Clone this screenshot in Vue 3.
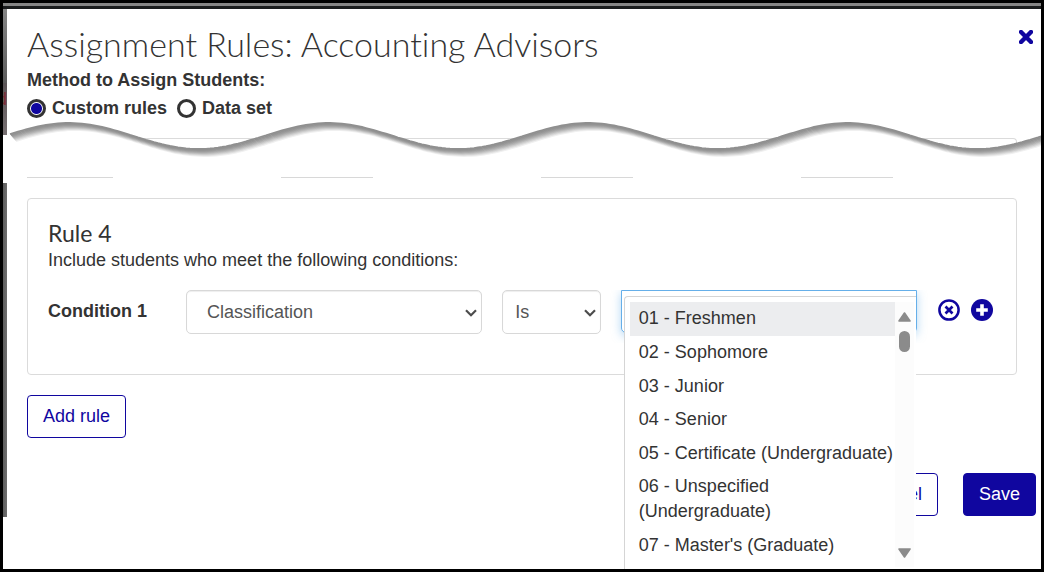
<script setup>
import { ref } from 'vue'

const method = ref('custom')
const field = ref('Classification')
const operator = ref('Is')
const active = ref(0)

const options = [
  '01 - Freshmen',
  '02 - Sophomore',
  '03 - Junior',
  '04 - Senior',
  '05 - Certificate (Undergraduate)',
  '06 - Unspecified (Undergraduate)',
  "07 - Master's (Graduate)"
]

// Torn-edge wave: one period per 259.5 units
function wavePoints() {
  const pts = []
  for (let x = 7; x <= 1043; x += 4) {
    const y = 15 - 13 * Math.cos(((x - 66) / 259.5) * 2 * Math.PI)
    pts.push(`${x},${y.toFixed(1)}`)
  }
  return pts.join(' ')
}
const wave = wavePoints()
const cover = `${wave} 1043,50 7,50`
const shades = ['#8f8f8f', '#939393', '#9c9c9c', '#a9a9a9', '#b9b9b9', '#cccccc', '#dedede', '#f0f0f0']
const layers = shades.map((color, i) => ({ color, i })).reverse()
</script>

<template>
  <div class="frame">
    <div class="backdrop-top"></div>
    <div class="body">
      <div class="strip" aria-hidden="true">
        <div class="strip-a"></div>
        <div class="strip-b"><span>d</span></div>
        <div class="strip-gap"></div>
        <div class="strip-c"></div>
      </div>

      <main class="dialog">
        <header>
          <h1>Assignment Rules: Accounting Advisors</h1>
          <button class="close" aria-label="Close">
            <svg viewBox="0 0 14 14" width="14" height="14"><path d="M2 2 12 12M12 2 2 12" stroke="#10069f" stroke-width="4.4" stroke-linecap="square" /></svg>
          </button>
        </header>

        <fieldset class="method">
          <legend>Method to Assign Students:</legend>
          <div class="radios">
            <label><input v-model="method" type="radio" name="method" value="custom" />Custom rules</label>
            <label><input v-model="method" type="radio" name="method" value="data" />Data set</label>
          </div>
        </fieldset>

        <div class="tear">
          <div class="previous"></div>
          <svg class="wave" viewBox="0 0 1038 50" preserveAspectRatio="none" aria-hidden="true">
            <polygon :points="cover" fill="#fff" />
            <polyline
              v-for="l in layers"
              :key="l.i"
              :points="wave"
              :transform="`translate(${l.i * 0.85} ${l.i})`"
              fill="none"
              :stroke="l.color"
              stroke-width="1.8"
            />
          </svg>
          <div class="dashes"></div>
        </div>

        <section class="card">
          <h2>Rule 4</h2>
          <p>Include students who meet the following conditions:</p>
          <div class="condition">
            <label class="name" for="field">Condition 1</label>
            <div class="select wide">
              <select id="field" v-model="field"><option>Classification</option></select>
              <svg viewBox="0 0 12 8" width="12" height="8"><path d="M1 1.2 6 6.2 11 1.2" fill="none" stroke="#4d4d4d" stroke-width="2.2" /></svg>
            </div>
            <div class="select">
              <select v-model="operator" aria-label="Operator"><option>Is</option></select>
              <svg viewBox="0 0 12 8" width="12" height="8"><path d="M1 1.2 6 6.2 11 1.2" fill="none" stroke="#4d4d4d" stroke-width="2.2" /></svg>
            </div>
            <div class="combo">
              <input type="text" role="combobox" aria-label="Value" aria-expanded="true" aria-controls="values" />
              <div class="popup">
                <ul id="values" role="listbox">
                  <li
                    v-for="(o, i) in options"
                    :key="o"
                    role="option"
                    :aria-selected="i === active"
                    :class="{ active: i === active }"
                    @mouseenter="active = i"
                  >{{ o }}</li>
                </ul>
                <div class="scrollbar" aria-hidden="true">
                  <svg viewBox="0 0 13 10" width="13" height="10"><path d="M6.5 1 12 9H1Z" fill="#8b8b8b" stroke="#8b8b8b" stroke-width="1.6" stroke-linejoin="round" /></svg>
                  <div class="thumb"></div>
                  <svg class="down" viewBox="0 0 13 10" width="13" height="10"><path d="M6.5 9 12 1H1Z" fill="#8b8b8b" stroke="#8b8b8b" stroke-width="1.6" stroke-linejoin="round" /></svg>
                </div>
              </div>
            </div>
            <div class="actions">
              <button aria-label="Remove condition">
                <svg viewBox="0 0 22 22" width="22" height="22"><circle cx="11" cy="11" r="9.6" fill="none" stroke="#10069f" stroke-width="2.5" /><path d="M7.5 7.5 14.5 14.5M14.5 7.5 7.5 14.5" stroke="#10069f" stroke-width="2.7" /></svg>
              </button>
              <button aria-label="Add condition">
                <svg viewBox="0 0 22 22" width="22" height="22"><circle cx="11" cy="11" r="11" fill="#10069f" /><path d="M11 5.2V16.8M5.2 11H16.8" stroke="#fff" stroke-width="3.6" /></svg>
              </button>
            </div>
          </div>
        </section>

        <button class="btn add">Add rule</button>

        <footer>
          <button class="btn">Cancel</button>
          <button class="btn primary">Save</button>
        </footer>
      </main>
    </div>
  </div>
</template>

<style>
body {
  background: #fff;
}
</style>

<style scoped>
* {
  box-sizing: border-box;
}
.frame {
  display: flex;
  flex-direction: column;
  height: 100vh;
  border: 3px solid #000;
  overflow: hidden;
  background: #fff;
  color: #333;
  font: 18px/25px "Liberation Sans", Arial, sans-serif;
}
.backdrop-top {
  flex: none;
  height: 6px;
  border-top: 3px solid #858585;
  border-bottom: 3px solid #1a1c1d;
}
.body {
  flex: 1;
  display: flex;
  min-height: 0;
}
.strip {
  flex: none;
  display: flex;
  flex-direction: column;
  width: 4px;
}
.strip-a {
  height: 74px;
  background: linear-gradient(#858585, #5b5b5b);
}
.strip-b {
  display: flex;
  justify-content: flex-end;
  height: 52px;
  padding-top: 4px;
  overflow: hidden;
  background: linear-gradient(#5a5456, #777072);
  color: #7b2c34;
}
.strip-gap {
  height: 48px;
}
.strip-c {
  height: 334px;
  background: linear-gradient(90deg, #5c5c5c, #6e6e6e);
}
.dialog {
  position: relative;
  flex: 1;
  min-width: 0;
  padding: 15px 5px 0 20px;
}
header {
  display: flex;
  justify-content: space-between;
  align-items: flex-start;
}
h1 {
  margin: 0;
  font: 300 34px/40px Lato, "Open Sans", sans-serif;
  font-variant-ligatures: none;
}
button {
  font: inherit;
  cursor: pointer;
}
.close,
.actions button {
  display: block;
  padding: 0;
  border: 0;
  background: none;
}
.close {
  margin: 6px 3px 0 0;
}
svg {
  display: block;
}
.method {
  margin: 0;
  padding: 0;
  border: 0;
  font-weight: 700;
}
legend {
  padding: 4px 0 0;
}
.radios {
  display: flex;
  gap: 10px;
  padding-top: 3px;
}
.radios label {
  display: flex;
  align-items: center;
  gap: 6px;
}
.radios input {
  appearance: none;
  width: 19px;
  height: 19px;
  margin: 0;
  border: 3px solid #333;
  border-radius: 50%;
  background: #fff;
}
.radios input:checked {
  background: radial-gradient(circle, #10069f 5px, #fff 6px);
}
.tear {
  position: relative;
  height: 77px;
  margin: 0 -5px 0 -24px;
}
.previous {
  position: absolute;
  top: 17px;
  left: 24px;
  right: 24px;
  height: 20px;
  border: 1px solid #dbdbdb;
  border-bottom: 0;
  border-radius: 4px 4px 0 0;
}
.wave {
  position: absolute;
  top: 0;
  left: 0;
  width: 100%;
  height: 50px;
}
.dashes {
  position: absolute;
  top: 56px;
  left: 24px;
  right: 40px;
  height: 1px;
  background: repeating-linear-gradient(90deg, #d8d8d8 0 92px, #fff 92px 260px) -6px 0 no-repeat;
}
.card {
  height: 177px;
  margin-right: 19px;
  padding: 20px;
  border: 1px solid #dbdbdb;
  border-radius: 4px;
}
h2 {
  margin: 0;
  font: 400 23px/29px Lato, "Open Sans", sans-serif;
}
p {
  margin: 0 0 17px;
}
.condition {
  display: grid;
  grid-template-columns: 118px 3fr 1fr 3fr auto;
  gap: 20px;
}
.name {
  padding-top: 9px;
  font-weight: 700;
}
.select {
  position: relative;
  min-width: 0;
}
.select select {
  appearance: none;
  width: 100%;
  height: 44px;
  padding: 0 12px;
  border: 1px solid #d8d8d8;
  border-radius: 5px;
  background: #fff;
  box-shadow: inset 0 1px 1px rgba(0, 0, 0, 0.07);
  color: #555;
  font: inherit;
}
.select.wide select {
  padding-left: 20px;
}
.select svg {
  position: absolute;
  top: 19px;
  right: 5px;
  pointer-events: none;
}
.combo {
  position: relative;
  min-width: 0;
}
.combo input {
  display: block;
  width: 100%;
  height: 43px;
  border: 1px solid #66afe9;
  border-radius: 0 0 5px 5px;
  outline: 0;
  box-shadow: 0 3px 10px rgba(102, 175, 233, 0.5);
  clip-path: inset(0 -16px -10px -16px);
  font: inherit;
}
.popup {
  position: absolute;
  z-index: 2;
  top: 6px;
  left: 3px;
  right: 1px;
  display: flex;
  height: 290px;
  padding: 5px 2px 0 5px;
  border: 1px solid #d5d5d5;
  border-right: 0;
  border-radius: 4px 0 0 0;
  background: #fff;
}
ul {
  flex: 1;
  min-width: 0;
  margin: 0;
  padding: 0;
  list-style: none;
}
li {
  padding: 4px 0 5px 9px;
}
li.active {
  background: #ecedef;
}
li + li {
  padding-bottom: 4px;
}
li:nth-child(even) {
  padding-bottom: 5px;
}
.scrollbar {
  display: flex;
  flex-direction: column;
  align-items: center;
  width: 19px;
  height: 265px;
  padding: 10px 0 9px;
  background: #fcfcfc;
}
.thumb {
  width: 11px;
  height: 21px;
  margin-top: 9px;
  border-radius: 6px;
  background: #8b8b8b;
}
.down {
  margin-top: auto;
}
.actions {
  display: flex;
  align-items: flex-start;
  gap: 11px;
  padding: 9px 3px 0 1px;
}
.btn {
  height: 43px;
  padding: 0 15px;
  border: 1px solid #10069f;
  border-radius: 4px;
  background: #fff;
  color: #10069f;
}
.btn.primary {
  background: #10069f;
  color: #fff;
}
.add {
  display: block;
  margin-top: 20px;
}
footer {
  display: flex;
  justify-content: flex-end;
  gap: 25px;
  margin-top: 35px;
}
</style>
